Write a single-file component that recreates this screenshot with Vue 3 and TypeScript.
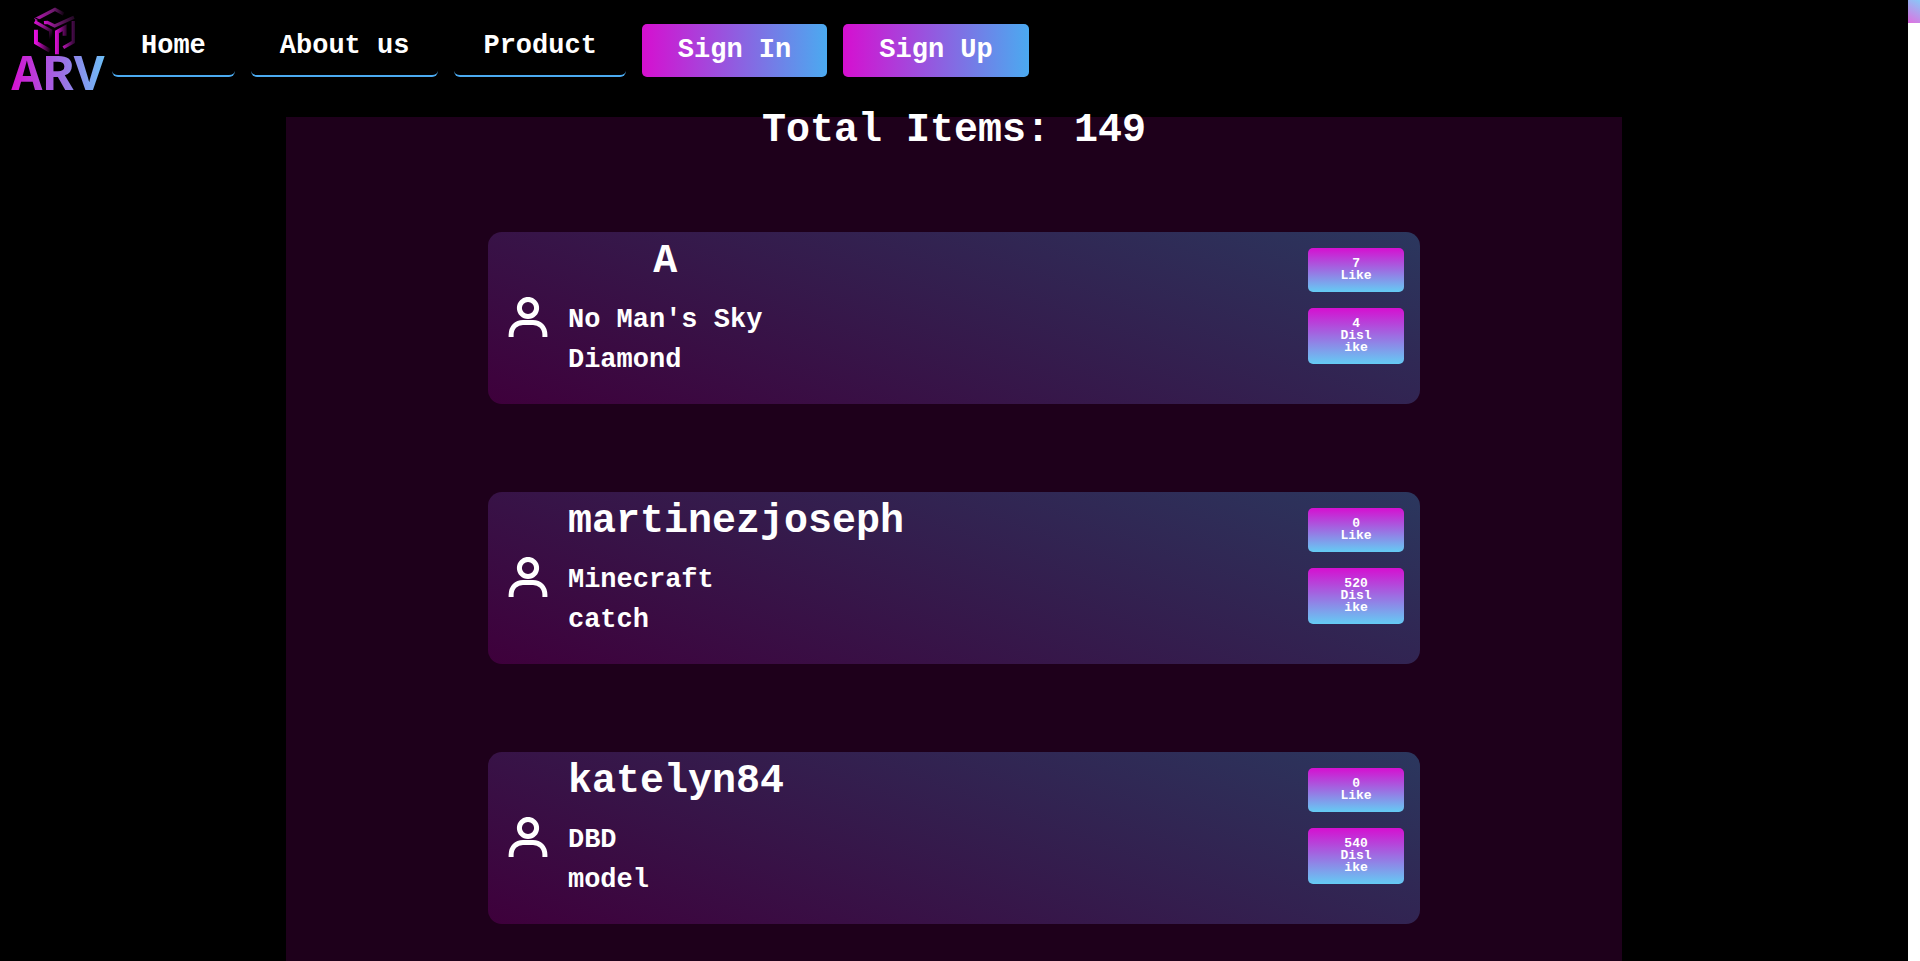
<script setup lang="ts">
interface Item {
  id: number
  user: string
  game: string
  title: string
  likes: number
  dislikes: number
}

const links: string[] = ['Home', 'About us', 'Product']
const total = 149
const items: Item[] = [
  { id: 1, user: 'A', game: "No Man's Sky", title: 'Diamond', likes: 7, dislikes: 4 },
  { id: 2, user: 'martinezjoseph', game: 'Minecraft', title: 'catch', likes: 0, dislikes: 520 },
  { id: 3, user: 'katelyn84', game: 'DBD', title: 'model', likes: 0, dislikes: 540 },
]
</script>

<template>
  <div class="page">
    <header class="header">
      <a class="brand" href="#">
        <svg class="cube" viewBox="30 20 126 144" aria-hidden="true">
          <defs>
            <linearGradient id="top" gradientUnits="userSpaceOnUse" x1="30" y1="0" x2="122" y2="0">
              <stop offset="0" stop-color="#b414b0" />
              <stop offset="0.65" stop-color="#6c1a6c" />
              <stop offset="1" stop-color="#080008" />
            </linearGradient>
            <linearGradient id="inner" gradientUnits="userSpaceOnUse" x1="58" y1="0" x2="154" y2="0">
              <stop offset="0" stop-color="#d60fd0" />
              <stop offset="0.35" stop-color="#7c1a7c" />
              <stop offset="1" stop-color="#1c081e" />
            </linearGradient>
            <linearGradient id="left" gradientUnits="userSpaceOnUse" x1="30" y1="60" x2="84" y2="110">
              <stop offset="0" stop-color="#e410de" />
              <stop offset="0.4" stop-color="#9c149a" />
              <stop offset="1" stop-color="#000000" />
            </linearGradient>
            <linearGradient id="left-edge" gradientUnits="userSpaceOnUse" x1="36" y1="0" x2="80" y2="0">
              <stop offset="0" stop-color="#e410de" />
              <stop offset="1" stop-color="#080008" />
            </linearGradient>
            <linearGradient id="right" gradientUnits="userSpaceOnUse" x1="96" y1="0" x2="132" y2="0">
              <stop offset="0" stop-color="#d60fd0" />
              <stop offset="1" stop-color="#180418" />
            </linearGradient>
            <linearGradient id="right-edge" gradientUnits="userSpaceOnUse" x1="118" y1="0" x2="154" y2="0">
              <stop offset="0" stop-color="#b414b0" />
              <stop offset="1" stop-color="#240828" />
            </linearGradient>
          </defs>
          <g fill="none" stroke-width="10">
            <path d="M119 41 L93 27 L33 58" stroke="url(#top)" />
            <path d="M34 53 L94 84" stroke="#000" stroke-width="4" />
            <path d="M60 67 L70 66 L92 77 L150 51" stroke="url(#inner)" />
            <path d="M32 64 L80 91 V134" stroke="url(#left)" />
            <path d="M36 88 V127 L78 151" stroke="url(#left-edge)" stroke-width="12" />
            <path d="M99 162 V95 L122 82 V106" stroke="url(#right)" stroke-width="12" />
            <path d="M148 62 V125 L118 142" stroke="url(#right-edge)" />
          </g>
        </svg>
        <span class="wordmark">ARV</span>
      </a>
      <nav class="nav">
        <a v-for="link in links" :key="link" class="link" href="#">{{ link }}</a>
        <button class="sign" type="button">Sign In</button>
        <button class="sign" type="button">Sign Up</button>
      </nav>
    </header>

    <main class="content">
      <h1 class="total">Total Items: {{ total }}</h1>
      <div class="list">
        <article v-for="item in items" :key="item.id" class="card">
          <svg class="avatar" viewBox="0 0 40 40" aria-hidden="true">
            <circle cx="20" cy="11" r="8.600" />
            <path d="M3.100 40 V38 C3.100 30 8.500 25.400 15 25.400 H25 C31.500 25.400 36.900 30 36.900 38 V40" />
          </svg>
          <div class="info">
            <h2>{{ item.user }}</h2>
            <p>{{ item.game }}</p>
            <p>{{ item.title }}</p>
          </div>
          <div class="votes">
            <button type="button">{{ item.likes }}<br />Like</button>
            <button type="button">{{ item.dislikes }}<br />Dislike</button>
          </div>
        </article>
      </div>
    </main>

    <div class="scrollbar" aria-hidden="true"><div class="thumb"></div></div>
  </div>
</template>

<style>
body {
  margin: 0;
  background: #000;
  overflow: hidden;
}
</style>

<style scoped>
.page {
  box-sizing: border-box;
  min-height: 100vh;
  padding-right: 12px;
  background: #000;
  color: #fff;
  font-family: "Liberation Mono", "DejaVu Sans Mono", monospace;
  font-weight: 700;
}

.header {
  display: flex;
  align-items: flex-start;
  box-sizing: border-box;
  height: 117px;
  padding: 7px 8px 0;
  background: #000;
}

.brand {
  display: flex;
  flex-direction: column;
  align-items: center;
  width: 104px;
  color: #fff;
  text-decoration: none;
}

.cube {
  width: 42px;
  height: 48px;
  margin-right: 10px;
}

.wordmark {
  margin-right: 4px;
  font-size: 52px;
  line-height: 44px;
  background: linear-gradient(90deg, #d60fd0, #6cc0f8);
  -webkit-background-clip: text;
  background-clip: text;
  color: transparent;
}

.nav {
  display: flex;
  align-items: flex-end;
  gap: 16px;
  height: 70px;
}

.link {
  box-sizing: border-box;
  height: 56px;
  padding: 0 29px;
  border-bottom: 2px solid #4baaf0;
  border-radius: 6px;
  color: #fff;
  font-size: 27px;
  line-height: 50px;
  text-decoration: none;
  white-space: nowrap;
}

.sign {
  box-sizing: border-box;
  height: 53px;
  padding: 0 36px;
  border: 0;
  border-radius: 5px;
  background: linear-gradient(90deg, #d60fd0, #4baaf0);
  color: #fff;
  font: inherit;
  font-size: 27px;
  line-height: 53px;
  white-space: nowrap;
}

.content {
  box-sizing: border-box;
  width: 70%;
  min-height: calc(100vh - 117px);
  margin: 0 auto;
  padding: 0 2px;
  background: #1e001b;
}

.total {
  margin: 0;
  font-size: 40px;
  line-height: 28px;
  text-align: center;
}

.list {
  display: flex;
  flex-direction: column;
  align-items: center;
  gap: 88px;
  padding-top: 87px;
}

.card {
  display: flex;
  box-sizing: border-box;
  width: 70%;
  min-height: 172px;
  padding: 16px 16px 8px 20px;
  border-radius: 14px;
  background: linear-gradient(20deg, #3e003b, #2b375e);
}

.avatar {
  width: 40px;
  height: 40px;
  margin: 49px 20px 0 0;
  fill: none;
  stroke: #fff;
  stroke-width: 5;
}

.info h2,
.info p {
  margin: 0;
  line-height: 40px;
}

.info h2 {
  margin-bottom: 24px;
  font-size: 40px;
  line-height: 28px;
  text-align: center;
}

.info p {
  font-size: 27px;
}

.votes {
  display: flex;
  flex-direction: column;
  align-items: flex-start;
  gap: 16px;
  margin-left: auto;
}

.votes button {
  width: 96px;
  padding: 10px 30px;
  border: 0;
  border-radius: 5px;
  background: linear-gradient(180deg, #d60fd0, #64ccf4);
  color: #fff;
  font: inherit;
  font-size: 13px;
  line-height: 12px;
  word-break: break-all;
}

.scrollbar {
  position: fixed;
  top: 0;
  right: 0;
  bottom: 0;
  width: 12px;
  background: #fff;
}

.thumb {
  height: 23px;
  background: linear-gradient(30deg, #e070e0, #88c8f8);
}
</style>
